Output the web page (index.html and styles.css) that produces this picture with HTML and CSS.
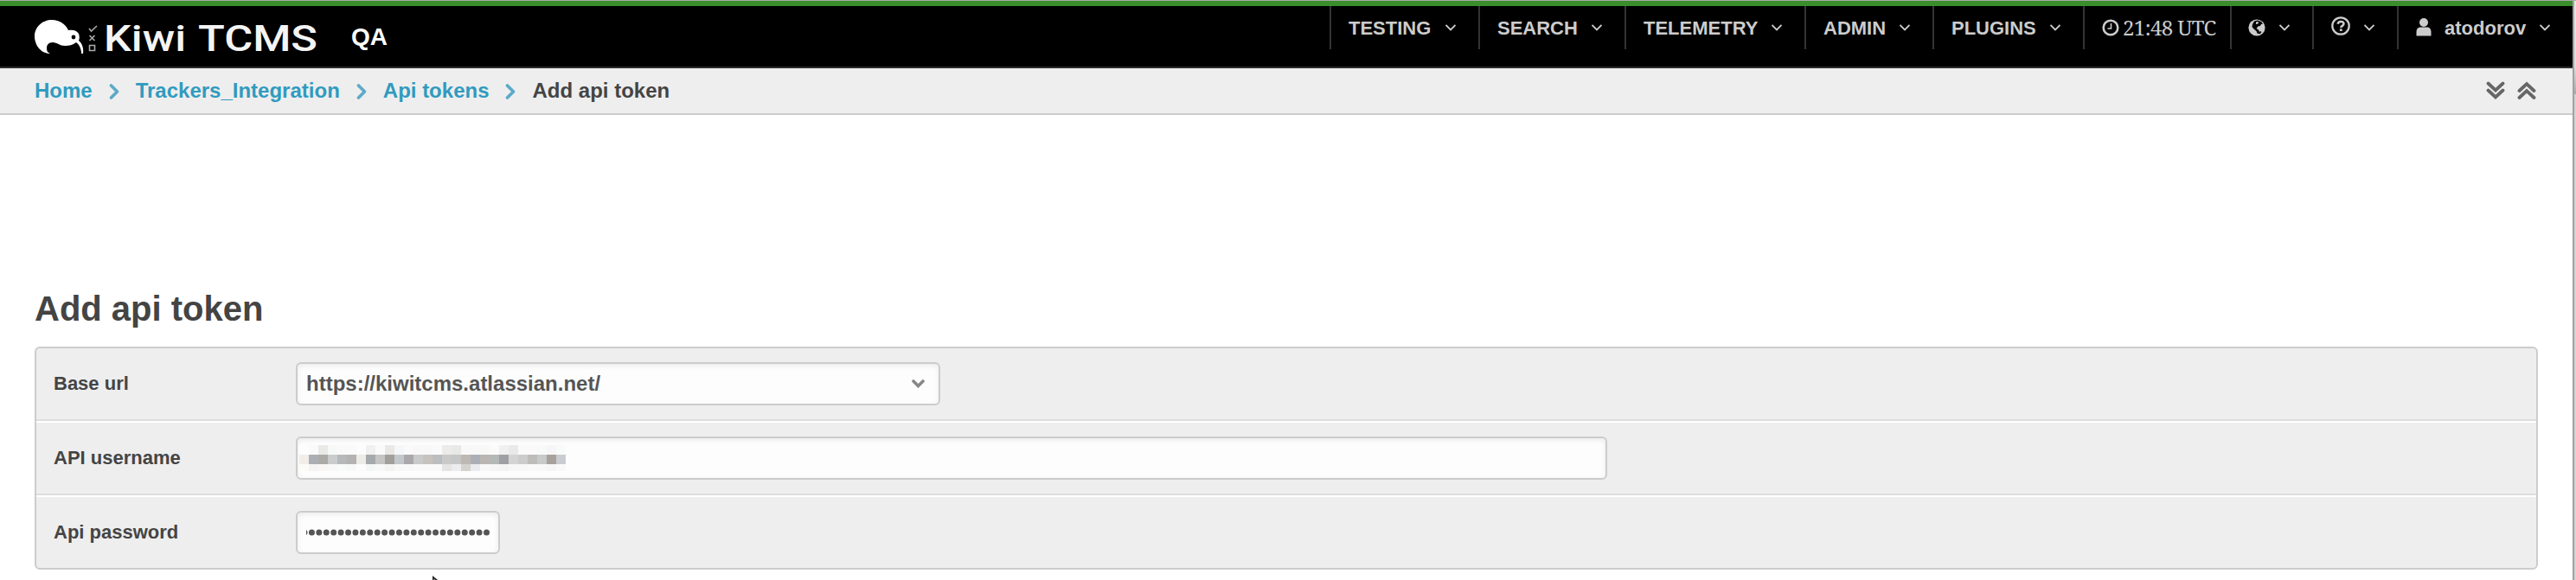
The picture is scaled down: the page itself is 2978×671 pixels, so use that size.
FILE: index.html
```html
<!DOCTYPE html>
<html lang="en">
<head>
<meta charset="utf-8">
<title>Add api token | Kiwi TCMS</title>
<link rel="stylesheet" href="styles.css">
</head>
<body>
<svg class="defs" width="0" height="0">
  <symbol id="chev" viewBox="0 0 12 8"><path d="M.5 1 6 6.500 11.500 1" fill="none" stroke="currentColor" stroke-width="1.800"/></symbol>
  <symbol id="sep" viewBox="0 0 12 18"><path d="M2.500 2 9.500 9 2.500 16" fill="none" stroke="currentColor" stroke-width="3.600" stroke-linecap="round" stroke-linejoin="round"/></symbol>
</svg>
<div class="window">
<div class="page">
  <header class="header">
    <a class="brand">
      <svg class="logo" width="326" height="42" viewBox="0 0 326 42">
        <path fill="#fff" d="M0 20C0 9 9 1 20 1c9 0 16 5 19 12 5-1 10 0 12 4 1 3 1 6 0 8 4 3 6 9 5 15h-2c0-5-2-10-6-13-4 3-8 4-13 4-6 0-9-4-14-4-5 0-7 3-7 7 0 3 1 5 4 6C7 40 0 30 0 20z"/>
        <circle cx="45" cy="21" r="2.400" fill="#000"/>
        <g fill="none" stroke="#aaa" stroke-width="1.600"><path d="M63 11l2.500 3 6.500-6"/><path d="M63.500 19l6 6m0-6l-6 6"/><path d="M63.500 30.500h6v6h-6z"/></g>
        <text class="word" x="80" y="37" textLength="95" lengthAdjust="spacingAndGlyphs">Kiwi</text>
        <text class="word" x="189" y="37" textLength="138" lengthAdjust="spacingAndGlyphs">TCMS</text>
      </svg>
      <span class="site">QA</span>
    </a>
    <nav class="nav">
      <a class="item testing">TESTING<svg class="chev"><use href="#chev"/></svg></a>
      <a class="item search">SEARCH<svg class="chev"><use href="#chev"/></svg></a>
      <a class="item telemetry">TELEMETRY<svg class="chev"><use href="#chev"/></svg></a>
      <a class="item admin">ADMIN<svg class="chev"><use href="#chev"/></svg></a>
      <a class="item plugins">PLUGINS<svg class="chev"><use href="#chev"/></svg></a>
      <a class="item clock"><svg class="ico" width="20" height="20" viewBox="0 0 20 20"><circle cx="10" cy="10" r="8.300" fill="none" stroke="currentColor" stroke-width="2.600"/><path d="M10.500 5v6H6.500" fill="none" stroke="currentColor" stroke-width="1.600"/></svg><span class="time">21:48 UTC</span></a>
      <a class="item globe"><svg class="ico" width="20" height="20" viewBox="0 0 20 20"><circle cx="10" cy="10" r="9.600" fill="currentColor"/><path fill="#000" d="M7 2.500l4-1 4 1.500 2 2.500-2 .5-1 2-2.500.5-2 2.500 2.500 1.500 1 2.500-2 2.500-1.500-3.500L6 11 4.500 9 5 6z"/><path fill="currentColor" d="M9 3.500l3-.5-.5 2.500-2.500.5z"/><path fill="currentColor" d="M11 9l6-1 1 5-4 1z"/><path fill="#000" d="M11.500 16.500l2.500-2.500 1.500 1-2 2.500z"/></svg><svg class="chev"><use href="#chev"/></svg></a>
      <a class="item help"><svg class="ico" width="22" height="22" viewBox="0 0 22 22"><circle cx="11" cy="11" r="9.700" fill="none" stroke="currentColor" stroke-width="2.300"/><path d="M7.600 8.700C8 6.600 9.300 5.900 11 5.900c2 0 3.500 1 3.500 2.700 0 2.300-3.200 2.200-3.200 4.400" fill="none" stroke="currentColor" stroke-width="2.500"/><path d="M9.900 14.300h2.800V17H9.900z" fill="currentColor"/></svg><svg class="chev"><use href="#chev"/></svg></a>
      <a class="item user"><svg class="ico" width="18" height="21" viewBox="0 0 18 21"><circle cx="9" cy="5" r="5" fill="currentColor"/><path d="M.5 20.500V16c0-3.500 2-5.500 4.500-5.500h8c2.500 0 4.500 2 4.500 5.500v4.500z" fill="currentColor"/></svg>atodorov<svg class="chev"><use href="#chev"/></svg></a>
    </nav>
  </header>

  <div class="crumbs">
    <a class="home">Home</a><svg class="sep"><use href="#sep"/></svg>
    <a>Trackers_Integration</a><svg class="sep"><use href="#sep"/></svg>
    <a>Api tokens</a><svg class="sep"><use href="#sep"/></svg>
    <span class="current">Add api token</span>
    <span class="tools">
      <svg width="22" height="22" viewBox="0 0 22 22"><path d="M2.500 2.500 11 10.500 19.500 2.500M2.500 10.500 11 18.500 19.500 10.500"/></svg>
      <svg width="22" height="22" viewBox="0 0 22 22"><path d="M2.500 11 11 3 19.500 11M2.500 19 11 11 19.500 19"/></svg>
    </span>
  </div>

  <main class="main">
    <h1>Add api token</h1>
    <div class="module">
      <div class="row"><label>Base url</label><div class="field select"><span>https://kiwitcms.atlassian.net/</span><svg width="15" height="10" viewBox="0 0 15 10"><path d="M2 2 7.500 7.500 13 2" fill="none" stroke="#888" stroke-width="3.600" stroke-linecap="round"/></svg></div></div>
      <div class="row"><label>API username</label><div class="field username"><svg id="mosaic" width="308" height="30" viewBox="0 0 308 30" shape-rendering="crispEdges"></svg></div></div>
      <div class="row"><label>Api password</label><div class="field password"><svg width="213" height="10" viewBox="0 0 213 10"><path d="M-2 5H212" stroke="#555" stroke-width="7" stroke-linecap="round" stroke-dasharray="0 8.420"/></svg></div></div>
    </div>
  </main>
</div>
<div class="edge"><div class="edge-top"></div></div>
</div>
<svg class="cursor" width="8" height="5" viewBox="0 0 8 5"><path d="M0 0v5h6z" fill="#222"/><path d="M1.500 3.500V5h1.500z" fill="#fff"/></svg>
<script src="mosaic.js"></script>
</body>
</html>
```
FILE: styles.css
```css
* { box-sizing: border-box; }
body { margin: 0; width: 2978px; height: 671px; overflow: hidden; background: #fff; color: #444; font-family: "Liberation Sans", Arial, sans-serif; font-weight: bold; }
.defs { position: absolute; }
.window { display: flex; height: 671px; border-top: 1px solid #aaa; overflow: hidden; }
.page { width: 2974px; }
.edge { width: 4px; background: #d4d4d4; border-left: 2px solid #a2a2a2; }
.edge-top { height: 108px; background: linear-gradient(#e8e8e8, #ddd 70%, #aaa); }
.header { height: 78px; display: flex; justify-content: space-between; background: #000; border-top: 6px solid #3a8f2c; border-bottom: 2px solid #2b2b2b; }
.brand { display: flex; padding: 15px 0 0 40px; }
.logo { overflow: visible; }
.word { font: 500 42px Roboto, sans-serif; fill: #f4f4f4; }
.site { margin-left: 40px; font-size: 28px; line-height: 42px; color: #fff; }
.nav { display: flex; height: 50px; color: #ccc; font-size: 22px; line-height: 50px; }
.item { display: flex; border-left: 2px solid #333; padding: 1px 26px 0 20px; height: 50px; white-space: nowrap; }
.chev { width: 12px; height: 8px; margin: 20px 0 0 auto; flex: none; }
.testing { width: 172px; }
.search { width: 169px; }
.telemetry { width: 208px; }
.admin { width: 148px; }
.plugins { width: 174px; }
.clock { width: 170px; }
.globe { width: 95px; }
.help { width: 98px; }
.user { width: 203px; }
.clock .ico { margin: 14px 4px 0 0; flex: none; }
.time { font: 24px/48px "Noto Serif", "Liberation Serif", serif; letter-spacing: -.6px; }
.globe .ico { margin-top: 14px; margin-left: -1px; }
.help .ico { margin-top: 11px; }
.user .ico { margin: 13px 15px 0 0; }
.crumbs { height: 54px; display: flex; align-items: center; background: #eee; border-bottom: 2px solid #ccc; padding: 0 42px 0 40px; font-size: 24px; color: #309bbf; }
.sep { width: 12px; height: 18px; margin: 1px 19px 0; color: #5aaac8; }
.current { color: #444; }
.tools { margin-left: auto; display: flex; gap: 14px; }
.tools path { fill: none; stroke: #666; stroke-width: 3.800; stroke-linecap: round; }
.main { padding: 201px 40px 0; }
h1 { margin: 0; font-size: 40px; line-height: 46px; height: 67px; }
.module { border: 2px solid #ccc; border-radius: 6px; background: #eee; height: 258px; overflow: hidden; }
.row { display: flex; height: 86px; padding: 16px 0 0 20px; border-bottom: 2px solid #ddd; border-top: 2px solid #fff; }
.row:first-child { height: 84px; border-top: 0; }
.row:last-child { border-bottom: 0; }
label { width: 280px; font-size: 22px; line-height: 50px; }
.field { height: 50px; display: flex; align-items: center; border: 2px solid #ccc; border-radius: 6px; background: #fdfdfd; box-shadow: inset 0 2px 6px rgba(0,0,0,.08); color: #555; font-size: 24px; }
.select { width: 745px; justify-content: space-between; padding: 0 16px 0 10px; }
.username { width: 1516px; padding-left: 2px; }
.password { width: 236px; padding-left: 10px; }
.cursor { position: absolute; left: 500px; top: 666px; }
```
FILE: mosaic.js
```js
// Redacted address: three bands of coloured cells.
const rows = [
  { y: 0, h: 11, c: 'fdfdfd fafafa e9e9e6 f7f8f8 f9f9f9 fafafa fcfcfc f0f0f0 fafafa e9e8e5 f4f6f8 fafafa f8f8f8 f8f8f8 fafafa ecebe9 e7e9e7 f8f8f8 f8f8f8 f8f8f8 fbfbfa f0f0f0 e9e9e9 fafafa fafafa f8faf9 f6f6f6 f9fafa'.split(' ') },
  { y: 11, h: 11, c: 'f2ede8 abafb5 adaba6 cacbcd b6b8ba b5b3b1 eeece7 a5a9ac c7c5c3 a19f9c c5c8cb aaa8aa c9cbca c7c2be babec1 c8c9c8 c4c7c5 bdb9b2 acb0b6 bab5b2 b4b9b8 a09fa4 d4d4d4 cccccc bdbcba c7c9cb a8a19b caccd1'.split(' ') },
  { y: 22, h: 8, c: 'fcfbf8 f4f4f4 f8f7f5 f8f8f8 f9fafa f8f8f8 fcfcfc f5f7f6 f8f8f8 f4f4f3 f8f8f8 f8f8f8 f9f9f9 f9f9f9 f9f9f9 e5e4e2 ebedef d4d3ce e9ebee f8f8f8 f5f5f5 f4f4f4 f7f7f7 f7f7f7 f9f9f9 f7f8f8 f6f6f6 f8f9f9'.split(' ') }
];
const svg = document.getElementById('mosaic');
rows.forEach(r => r.c.forEach((c, i) => {
  const cell = document.createElementNS('http://www.w3.org/2000/svg', 'rect');
  cell.setAttribute('x', i * 11);
  cell.setAttribute('y', r.y);
  cell.setAttribute('width', 11);
  cell.setAttribute('height', r.h);
  cell.setAttribute('fill', '#' + c);
  svg.appendChild(cell);
}));
```
